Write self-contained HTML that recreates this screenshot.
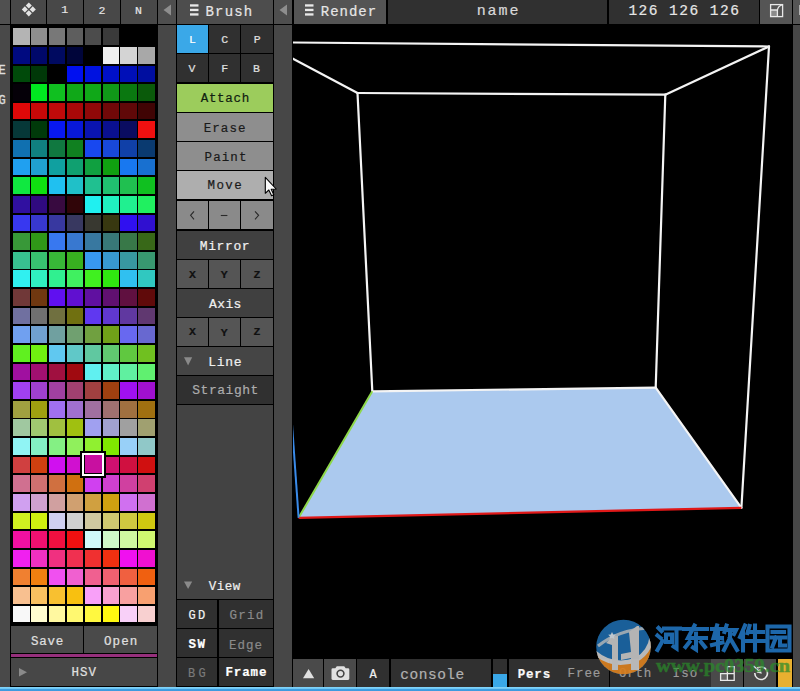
<!DOCTYPE html><html><head><meta charset="utf-8"><style>
html,body{margin:0;padding:0;}
body{width:800px;height:691px;background:#000;position:relative;overflow:hidden;font-family:"Liberation Mono",monospace;}
div{position:absolute;box-sizing:border-box;}
.t{white-space:pre;height:30px;line-height:30px;-webkit-text-stroke:0.2px currentColor;}
</style></head><body>
<div style="left:0px;top:0px;width:10px;height:24px;background:#505050;"></div>
<div style="left:0px;top:25px;width:10px;height:666px;background:#494949;"></div>
<div style="left:11px;top:0px;width:35px;height:24px;background:#484848;"></div>
<div style="left:47px;top:0px;width:36px;height:24px;background:#484848"></div>
<div style="left:84px;top:0px;width:36px;height:24px;background:#484848"></div>
<div style="left:121px;top:0px;width:36px;height:24px;background:#484848"></div>
<div style="left:13.0px;top:28.2px;width:16.6px;height:16.8px;background:#b4b4b4"></div>
<div style="left:30.9px;top:28.2px;width:16.6px;height:16.8px;background:#8e8e8e"></div>
<div style="left:48.8px;top:28.2px;width:16.6px;height:16.8px;background:#787878"></div>
<div style="left:66.7px;top:28.2px;width:16.6px;height:16.8px;background:#5e5e5e"></div>
<div style="left:84.6px;top:28.2px;width:16.6px;height:16.8px;background:#4c4c4c"></div>
<div style="left:102.5px;top:28.2px;width:16.6px;height:16.8px;background:#3a3a3a"></div>
<div style="left:120.4px;top:28.2px;width:16.6px;height:16.8px;background:#000000"></div>
<div style="left:138.3px;top:28.2px;width:16.6px;height:16.8px;background:#000000"></div>
<div style="left:13.0px;top:46.8px;width:16.6px;height:16.8px;background:#000a80"></div>
<div style="left:30.9px;top:46.8px;width:16.6px;height:16.8px;background:#00086a"></div>
<div style="left:48.8px;top:46.8px;width:16.6px;height:16.8px;background:#000a60"></div>
<div style="left:66.7px;top:46.8px;width:16.6px;height:16.8px;background:#00053a"></div>
<div style="left:84.6px;top:46.8px;width:16.6px;height:16.8px;background:#000000"></div>
<div style="left:102.5px;top:46.8px;width:16.6px;height:16.8px;background:#f0f0f0"></div>
<div style="left:120.4px;top:46.8px;width:16.6px;height:16.8px;background:#d4d4d4"></div>
<div style="left:138.3px;top:46.8px;width:16.6px;height:16.8px;background:#a8a8a8"></div>
<div style="left:13.0px;top:65.5px;width:16.6px;height:16.8px;background:#004a0a"></div>
<div style="left:30.9px;top:65.5px;width:16.6px;height:16.8px;background:#003808"></div>
<div style="left:48.8px;top:65.5px;width:16.6px;height:16.8px;background:#000000"></div>
<div style="left:66.7px;top:65.5px;width:16.6px;height:16.8px;background:#0010f0"></div>
<div style="left:84.6px;top:65.5px;width:16.6px;height:16.8px;background:#0012e0"></div>
<div style="left:102.5px;top:65.5px;width:16.6px;height:16.8px;background:#0010c8"></div>
<div style="left:120.4px;top:65.5px;width:16.6px;height:16.8px;background:#000fb8"></div>
<div style="left:138.3px;top:65.5px;width:16.6px;height:16.8px;background:#000ea0"></div>
<div style="left:13.0px;top:84.1px;width:16.6px;height:16.8px;background:#050008"></div>
<div style="left:30.9px;top:84.1px;width:16.6px;height:16.8px;background:#00e820"></div>
<div style="left:48.8px;top:84.1px;width:16.6px;height:16.8px;background:#10c020"></div>
<div style="left:66.7px;top:84.1px;width:16.6px;height:16.8px;background:#10a818"></div>
<div style="left:84.6px;top:84.1px;width:16.6px;height:16.8px;background:#10a818"></div>
<div style="left:102.5px;top:84.1px;width:16.6px;height:16.8px;background:#109818"></div>
<div style="left:120.4px;top:84.1px;width:16.6px;height:16.8px;background:#0a7810"></div>
<div style="left:138.3px;top:84.1px;width:16.6px;height:16.8px;background:#0a5a0a"></div>
<div style="left:13.0px;top:102.7px;width:16.6px;height:16.8px;background:#e00808"></div>
<div style="left:30.9px;top:102.7px;width:16.6px;height:16.8px;background:#c80808"></div>
<div style="left:48.8px;top:102.7px;width:16.6px;height:16.8px;background:#c00a0a"></div>
<div style="left:66.7px;top:102.7px;width:16.6px;height:16.8px;background:#a80808"></div>
<div style="left:84.6px;top:102.7px;width:16.6px;height:16.8px;background:#900808"></div>
<div style="left:102.5px;top:102.7px;width:16.6px;height:16.8px;background:#700808"></div>
<div style="left:120.4px;top:102.7px;width:16.6px;height:16.8px;background:#600808"></div>
<div style="left:138.3px;top:102.7px;width:16.6px;height:16.8px;background:#400404"></div>
<div style="left:13.0px;top:121.3px;width:16.6px;height:16.8px;background:#063838"></div>
<div style="left:30.9px;top:121.3px;width:16.6px;height:16.8px;background:#003a0a"></div>
<div style="left:48.8px;top:121.3px;width:16.6px;height:16.8px;background:#0818f0"></div>
<div style="left:66.7px;top:121.3px;width:16.6px;height:16.8px;background:#0818d8"></div>
<div style="left:84.6px;top:121.3px;width:16.6px;height:16.8px;background:#0a14b0"></div>
<div style="left:102.5px;top:121.3px;width:16.6px;height:16.8px;background:#0a1090"></div>
<div style="left:120.4px;top:121.3px;width:16.6px;height:16.8px;background:#0a0c60"></div>
<div style="left:138.3px;top:121.3px;width:16.6px;height:16.8px;background:#f01010"></div>
<div style="left:13.0px;top:140.0px;width:16.6px;height:16.8px;background:#1070b0"></div>
<div style="left:30.9px;top:140.0px;width:16.6px;height:16.8px;background:#108080"></div>
<div style="left:48.8px;top:140.0px;width:16.6px;height:16.8px;background:#107840"></div>
<div style="left:66.7px;top:140.0px;width:16.6px;height:16.8px;background:#108020"></div>
<div style="left:84.6px;top:140.0px;width:16.6px;height:16.8px;background:#1848f0"></div>
<div style="left:102.5px;top:140.0px;width:16.6px;height:16.8px;background:#1848d8"></div>
<div style="left:120.4px;top:140.0px;width:16.6px;height:16.8px;background:#1040a8"></div>
<div style="left:138.3px;top:140.0px;width:16.6px;height:16.8px;background:#0a3a70"></div>
<div style="left:13.0px;top:158.6px;width:16.6px;height:16.8px;background:#20a0f0"></div>
<div style="left:30.9px;top:158.6px;width:16.6px;height:16.8px;background:#20a0d0"></div>
<div style="left:48.8px;top:158.6px;width:16.6px;height:16.8px;background:#10a0a0"></div>
<div style="left:66.7px;top:158.6px;width:16.6px;height:16.8px;background:#10a070"></div>
<div style="left:84.6px;top:158.6px;width:16.6px;height:16.8px;background:#10a040"></div>
<div style="left:102.5px;top:158.6px;width:16.6px;height:16.8px;background:#10a010"></div>
<div style="left:120.4px;top:158.6px;width:16.6px;height:16.8px;background:#1878f0"></div>
<div style="left:138.3px;top:158.6px;width:16.6px;height:16.8px;background:#1870d0"></div>
<div style="left:13.0px;top:177.2px;width:16.6px;height:16.8px;background:#10e840"></div>
<div style="left:30.9px;top:177.2px;width:16.6px;height:16.8px;background:#10e010"></div>
<div style="left:48.8px;top:177.2px;width:16.6px;height:16.8px;background:#20c0f0"></div>
<div style="left:66.7px;top:177.2px;width:16.6px;height:16.8px;background:#20c0c8"></div>
<div style="left:84.6px;top:177.2px;width:16.6px;height:16.8px;background:#20c090"></div>
<div style="left:102.5px;top:177.2px;width:16.6px;height:16.8px;background:#20c070"></div>
<div style="left:120.4px;top:177.2px;width:16.6px;height:16.8px;background:#20c050"></div>
<div style="left:138.3px;top:177.2px;width:16.6px;height:16.8px;background:#10c020"></div>
<div style="left:13.0px;top:195.9px;width:16.6px;height:16.8px;background:#3010a0"></div>
<div style="left:30.9px;top:195.9px;width:16.6px;height:16.8px;background:#300a80"></div>
<div style="left:48.8px;top:195.9px;width:16.6px;height:16.8px;background:#380a40"></div>
<div style="left:66.7px;top:195.9px;width:16.6px;height:16.8px;background:#300508"></div>
<div style="left:84.6px;top:195.9px;width:16.6px;height:16.8px;background:#20f0f0"></div>
<div style="left:102.5px;top:195.9px;width:16.6px;height:16.8px;background:#20f0c0"></div>
<div style="left:120.4px;top:195.9px;width:16.6px;height:16.8px;background:#20f090"></div>
<div style="left:138.3px;top:195.9px;width:16.6px;height:16.8px;background:#20f060"></div>
<div style="left:13.0px;top:214.5px;width:16.6px;height:16.8px;background:#3838f0"></div>
<div style="left:30.9px;top:214.5px;width:16.6px;height:16.8px;background:#3838d0"></div>
<div style="left:48.8px;top:214.5px;width:16.6px;height:16.8px;background:#3838a0"></div>
<div style="left:66.7px;top:214.5px;width:16.6px;height:16.8px;background:#383860"></div>
<div style="left:84.6px;top:214.5px;width:16.6px;height:16.8px;background:#383830"></div>
<div style="left:102.5px;top:214.5px;width:16.6px;height:16.8px;background:#383810"></div>
<div style="left:120.4px;top:214.5px;width:16.6px;height:16.8px;background:#3010f0"></div>
<div style="left:138.3px;top:214.5px;width:16.6px;height:16.8px;background:#3010d0"></div>
<div style="left:13.0px;top:233.1px;width:16.6px;height:16.8px;background:#389838"></div>
<div style="left:30.9px;top:233.1px;width:16.6px;height:16.8px;background:#309818"></div>
<div style="left:48.8px;top:233.1px;width:16.6px;height:16.8px;background:#3878f0"></div>
<div style="left:66.7px;top:233.1px;width:16.6px;height:16.8px;background:#3878d0"></div>
<div style="left:84.6px;top:233.1px;width:16.6px;height:16.8px;background:#3878a0"></div>
<div style="left:102.5px;top:233.1px;width:16.6px;height:16.8px;background:#387878"></div>
<div style="left:120.4px;top:233.1px;width:16.6px;height:16.8px;background:#387848"></div>
<div style="left:138.3px;top:233.1px;width:16.6px;height:16.8px;background:#386818"></div>
<div style="left:13.0px;top:251.8px;width:16.6px;height:16.8px;background:#38c090"></div>
<div style="left:30.9px;top:251.8px;width:16.6px;height:16.8px;background:#38c070"></div>
<div style="left:48.8px;top:251.8px;width:16.6px;height:16.8px;background:#38b838"></div>
<div style="left:66.7px;top:251.8px;width:16.6px;height:16.8px;background:#38b020"></div>
<div style="left:84.6px;top:251.8px;width:16.6px;height:16.8px;background:#3898f0"></div>
<div style="left:102.5px;top:251.8px;width:16.6px;height:16.8px;background:#3898d0"></div>
<div style="left:120.4px;top:251.8px;width:16.6px;height:16.8px;background:#3898a0"></div>
<div style="left:138.3px;top:251.8px;width:16.6px;height:16.8px;background:#389870"></div>
<div style="left:13.0px;top:270.4px;width:16.6px;height:16.8px;background:#30f0f0"></div>
<div style="left:30.9px;top:270.4px;width:16.6px;height:16.8px;background:#30f0c0"></div>
<div style="left:48.8px;top:270.4px;width:16.6px;height:16.8px;background:#30f090"></div>
<div style="left:66.7px;top:270.4px;width:16.6px;height:16.8px;background:#40f060"></div>
<div style="left:84.6px;top:270.4px;width:16.6px;height:16.8px;background:#40f020"></div>
<div style="left:102.5px;top:270.4px;width:16.6px;height:16.8px;background:#30e810"></div>
<div style="left:120.4px;top:270.4px;width:16.6px;height:16.8px;background:#30c0f0"></div>
<div style="left:138.3px;top:270.4px;width:16.6px;height:16.8px;background:#30c8c0"></div>
<div style="left:13.0px;top:289.0px;width:16.6px;height:16.8px;background:#703838"></div>
<div style="left:30.9px;top:289.0px;width:16.6px;height:16.8px;background:#703810"></div>
<div style="left:48.8px;top:289.0px;width:16.6px;height:16.8px;background:#6010f0"></div>
<div style="left:66.7px;top:289.0px;width:16.6px;height:16.8px;background:#6010d0"></div>
<div style="left:84.6px;top:289.0px;width:16.6px;height:16.8px;background:#6010a0"></div>
<div style="left:102.5px;top:289.0px;width:16.6px;height:16.8px;background:#601070"></div>
<div style="left:120.4px;top:289.0px;width:16.6px;height:16.8px;background:#601040"></div>
<div style="left:138.3px;top:289.0px;width:16.6px;height:16.8px;background:#600a0a"></div>
<div style="left:13.0px;top:307.6px;width:16.6px;height:16.8px;background:#7070a0"></div>
<div style="left:30.9px;top:307.6px;width:16.6px;height:16.8px;background:#707070"></div>
<div style="left:48.8px;top:307.6px;width:16.6px;height:16.8px;background:#707040"></div>
<div style="left:66.7px;top:307.6px;width:16.6px;height:16.8px;background:#707010"></div>
<div style="left:84.6px;top:307.6px;width:16.6px;height:16.8px;background:#6038f0"></div>
<div style="left:102.5px;top:307.6px;width:16.6px;height:16.8px;background:#6038d0"></div>
<div style="left:120.4px;top:307.6px;width:16.6px;height:16.8px;background:#6038a0"></div>
<div style="left:138.3px;top:307.6px;width:16.6px;height:16.8px;background:#603870"></div>
<div style="left:13.0px;top:326.3px;width:16.6px;height:16.8px;background:#70a0f0"></div>
<div style="left:30.9px;top:326.3px;width:16.6px;height:16.8px;background:#70a0d0"></div>
<div style="left:48.8px;top:326.3px;width:16.6px;height:16.8px;background:#70a0a0"></div>
<div style="left:66.7px;top:326.3px;width:16.6px;height:16.8px;background:#70a070"></div>
<div style="left:84.6px;top:326.3px;width:16.6px;height:16.8px;background:#70a040"></div>
<div style="left:102.5px;top:326.3px;width:16.6px;height:16.8px;background:#70a018"></div>
<div style="left:120.4px;top:326.3px;width:16.6px;height:16.8px;background:#6868f0"></div>
<div style="left:138.3px;top:326.3px;width:16.6px;height:16.8px;background:#6868d0"></div>
<div style="left:13.0px;top:344.9px;width:16.6px;height:16.8px;background:#60f020"></div>
<div style="left:30.9px;top:344.9px;width:16.6px;height:16.8px;background:#70f010"></div>
<div style="left:48.8px;top:344.9px;width:16.6px;height:16.8px;background:#60c8f0"></div>
<div style="left:66.7px;top:344.9px;width:16.6px;height:16.8px;background:#60c8c8"></div>
<div style="left:84.6px;top:344.9px;width:16.6px;height:16.8px;background:#60c8a0"></div>
<div style="left:102.5px;top:344.9px;width:16.6px;height:16.8px;background:#60c870"></div>
<div style="left:120.4px;top:344.9px;width:16.6px;height:16.8px;background:#60c840"></div>
<div style="left:138.3px;top:344.9px;width:16.6px;height:16.8px;background:#70c020"></div>
<div style="left:13.0px;top:363.5px;width:16.6px;height:16.8px;background:#a010a0"></div>
<div style="left:30.9px;top:363.5px;width:16.6px;height:16.8px;background:#a01070"></div>
<div style="left:48.8px;top:363.5px;width:16.6px;height:16.8px;background:#a01040"></div>
<div style="left:66.7px;top:363.5px;width:16.6px;height:16.8px;background:#a00a10"></div>
<div style="left:84.6px;top:363.5px;width:16.6px;height:16.8px;background:#60f0f0"></div>
<div style="left:102.5px;top:363.5px;width:16.6px;height:16.8px;background:#60f0c8"></div>
<div style="left:120.4px;top:363.5px;width:16.6px;height:16.8px;background:#60f0a0"></div>
<div style="left:138.3px;top:363.5px;width:16.6px;height:16.8px;background:#60f070"></div>
<div style="left:13.0px;top:382.2px;width:16.6px;height:16.8px;background:#a040f0"></div>
<div style="left:30.9px;top:382.2px;width:16.6px;height:16.8px;background:#a040d0"></div>
<div style="left:48.8px;top:382.2px;width:16.6px;height:16.8px;background:#a040a0"></div>
<div style="left:66.7px;top:382.2px;width:16.6px;height:16.8px;background:#a04070"></div>
<div style="left:84.6px;top:382.2px;width:16.6px;height:16.8px;background:#a04040"></div>
<div style="left:102.5px;top:382.2px;width:16.6px;height:16.8px;background:#a04010"></div>
<div style="left:120.4px;top:382.2px;width:16.6px;height:16.8px;background:#a010f0"></div>
<div style="left:138.3px;top:382.2px;width:16.6px;height:16.8px;background:#a010d0"></div>
<div style="left:13.0px;top:400.8px;width:16.6px;height:16.8px;background:#a0a040"></div>
<div style="left:30.9px;top:400.8px;width:16.6px;height:16.8px;background:#a0a010"></div>
<div style="left:48.8px;top:400.8px;width:16.6px;height:16.8px;background:#a070f0"></div>
<div style="left:66.7px;top:400.8px;width:16.6px;height:16.8px;background:#a070d0"></div>
<div style="left:84.6px;top:400.8px;width:16.6px;height:16.8px;background:#a070a0"></div>
<div style="left:102.5px;top:400.8px;width:16.6px;height:16.8px;background:#a07070"></div>
<div style="left:120.4px;top:400.8px;width:16.6px;height:16.8px;background:#a07040"></div>
<div style="left:138.3px;top:400.8px;width:16.6px;height:16.8px;background:#a07010"></div>
<div style="left:13.0px;top:419.4px;width:16.6px;height:16.8px;background:#a0c8a0"></div>
<div style="left:30.9px;top:419.4px;width:16.6px;height:16.8px;background:#a0c870"></div>
<div style="left:48.8px;top:419.4px;width:16.6px;height:16.8px;background:#a0c040"></div>
<div style="left:66.7px;top:419.4px;width:16.6px;height:16.8px;background:#a0c010"></div>
<div style="left:84.6px;top:419.4px;width:16.6px;height:16.8px;background:#a0a0f0"></div>
<div style="left:102.5px;top:419.4px;width:16.6px;height:16.8px;background:#a0a0d0"></div>
<div style="left:120.4px;top:419.4px;width:16.6px;height:16.8px;background:#a0a0a0"></div>
<div style="left:138.3px;top:419.4px;width:16.6px;height:16.8px;background:#a0a070"></div>
<div style="left:13.0px;top:438.1px;width:16.6px;height:16.8px;background:#90f4f4"></div>
<div style="left:30.9px;top:438.1px;width:16.6px;height:16.8px;background:#84f0c4"></div>
<div style="left:48.8px;top:438.1px;width:16.6px;height:16.8px;background:#84f084"></div>
<div style="left:66.7px;top:438.1px;width:16.6px;height:16.8px;background:#90f05c"></div>
<div style="left:84.6px;top:438.1px;width:16.6px;height:16.8px;background:#90f030"></div>
<div style="left:102.5px;top:438.1px;width:16.6px;height:16.8px;background:#80e800"></div>
<div style="left:120.4px;top:438.1px;width:16.6px;height:16.8px;background:#98d0f8"></div>
<div style="left:138.3px;top:438.1px;width:16.6px;height:16.8px;background:#90c8c8"></div>
<div style="left:13.0px;top:456.7px;width:16.6px;height:16.8px;background:#d04040"></div>
<div style="left:30.9px;top:456.7px;width:16.6px;height:16.8px;background:#d04010"></div>
<div style="left:48.8px;top:456.7px;width:16.6px;height:16.8px;background:#d010f0"></div>
<div style="left:66.7px;top:456.7px;width:16.6px;height:16.8px;background:#d010d0"></div>
<div style="left:84.6px;top:456.7px;width:16.6px;height:16.8px;background:#d010a0"></div>
<div style="left:102.5px;top:456.7px;width:16.6px;height:16.8px;background:#d01070"></div>
<div style="left:120.4px;top:456.7px;width:16.6px;height:16.8px;background:#d01040"></div>
<div style="left:138.3px;top:456.7px;width:16.6px;height:16.8px;background:#d01010"></div>
<div style="left:13.0px;top:475.3px;width:16.6px;height:16.8px;background:#d07090"></div>
<div style="left:30.9px;top:475.3px;width:16.6px;height:16.8px;background:#d07070"></div>
<div style="left:48.8px;top:475.3px;width:16.6px;height:16.8px;background:#d07040"></div>
<div style="left:66.7px;top:475.3px;width:16.6px;height:16.8px;background:#d07010"></div>
<div style="left:84.6px;top:475.3px;width:16.6px;height:16.8px;background:#d040f0"></div>
<div style="left:102.5px;top:475.3px;width:16.6px;height:16.8px;background:#d040d0"></div>
<div style="left:120.4px;top:475.3px;width:16.6px;height:16.8px;background:#d040a0"></div>
<div style="left:138.3px;top:475.3px;width:16.6px;height:16.8px;background:#d04070"></div>
<div style="left:13.0px;top:493.9px;width:16.6px;height:16.8px;background:#d0a0f0"></div>
<div style="left:30.9px;top:493.9px;width:16.6px;height:16.8px;background:#d0a0d0"></div>
<div style="left:48.8px;top:493.9px;width:16.6px;height:16.8px;background:#d0a0a0"></div>
<div style="left:66.7px;top:493.9px;width:16.6px;height:16.8px;background:#d0a070"></div>
<div style="left:84.6px;top:493.9px;width:16.6px;height:16.8px;background:#d0a040"></div>
<div style="left:102.5px;top:493.9px;width:16.6px;height:16.8px;background:#d0a010"></div>
<div style="left:120.4px;top:493.9px;width:16.6px;height:16.8px;background:#d070f0"></div>
<div style="left:138.3px;top:493.9px;width:16.6px;height:16.8px;background:#d070d0"></div>
<div style="left:13.0px;top:512.6px;width:16.6px;height:16.8px;background:#d0f020"></div>
<div style="left:30.9px;top:512.6px;width:16.6px;height:16.8px;background:#d0f010"></div>
<div style="left:48.8px;top:512.6px;width:16.6px;height:16.8px;background:#d0d0f0"></div>
<div style="left:66.7px;top:512.6px;width:16.6px;height:16.8px;background:#d0d0d0"></div>
<div style="left:84.6px;top:512.6px;width:16.6px;height:16.8px;background:#d0c8a0"></div>
<div style="left:102.5px;top:512.6px;width:16.6px;height:16.8px;background:#d0c870"></div>
<div style="left:120.4px;top:512.6px;width:16.6px;height:16.8px;background:#d0c840"></div>
<div style="left:138.3px;top:512.6px;width:16.6px;height:16.8px;background:#d0c810"></div>
<div style="left:13.0px;top:531.2px;width:16.6px;height:16.8px;background:#f010a0"></div>
<div style="left:30.9px;top:531.2px;width:16.6px;height:16.8px;background:#f01070"></div>
<div style="left:48.8px;top:531.2px;width:16.6px;height:16.8px;background:#f01040"></div>
<div style="left:66.7px;top:531.2px;width:16.6px;height:16.8px;background:#f01010"></div>
<div style="left:84.6px;top:531.2px;width:16.6px;height:16.8px;background:#d0f8f8"></div>
<div style="left:102.5px;top:531.2px;width:16.6px;height:16.8px;background:#d0f8c8"></div>
<div style="left:120.4px;top:531.2px;width:16.6px;height:16.8px;background:#d0f8a0"></div>
<div style="left:138.3px;top:531.2px;width:16.6px;height:16.8px;background:#d0f870"></div>
<div style="left:13.0px;top:549.8px;width:16.6px;height:16.8px;background:#f020f0"></div>
<div style="left:30.9px;top:549.8px;width:16.6px;height:16.8px;background:#f030c0"></div>
<div style="left:48.8px;top:549.8px;width:16.6px;height:16.8px;background:#f03080"></div>
<div style="left:66.7px;top:549.8px;width:16.6px;height:16.8px;background:#f03050"></div>
<div style="left:84.6px;top:549.8px;width:16.6px;height:16.8px;background:#f03030"></div>
<div style="left:102.5px;top:549.8px;width:16.6px;height:16.8px;background:#f03010"></div>
<div style="left:120.4px;top:549.8px;width:16.6px;height:16.8px;background:#f010f0"></div>
<div style="left:138.3px;top:549.8px;width:16.6px;height:16.8px;background:#f010d0"></div>
<div style="left:13.0px;top:568.5px;width:16.6px;height:16.8px;background:#f08030"></div>
<div style="left:30.9px;top:568.5px;width:16.6px;height:16.8px;background:#f08010"></div>
<div style="left:48.8px;top:568.5px;width:16.6px;height:16.8px;background:#f050f0"></div>
<div style="left:66.7px;top:568.5px;width:16.6px;height:16.8px;background:#f060d0"></div>
<div style="left:84.6px;top:568.5px;width:16.6px;height:16.8px;background:#f06090"></div>
<div style="left:102.5px;top:568.5px;width:16.6px;height:16.8px;background:#f06070"></div>
<div style="left:120.4px;top:568.5px;width:16.6px;height:16.8px;background:#f06040"></div>
<div style="left:138.3px;top:568.5px;width:16.6px;height:16.8px;background:#f06010"></div>
<div style="left:13.0px;top:587.1px;width:16.6px;height:16.8px;background:#f8c090"></div>
<div style="left:30.9px;top:587.1px;width:16.6px;height:16.8px;background:#f8c060"></div>
<div style="left:48.8px;top:587.1px;width:16.6px;height:16.8px;background:#f8c030"></div>
<div style="left:66.7px;top:587.1px;width:16.6px;height:16.8px;background:#f8c010"></div>
<div style="left:84.6px;top:587.1px;width:16.6px;height:16.8px;background:#f8a0f8"></div>
<div style="left:102.5px;top:587.1px;width:16.6px;height:16.8px;background:#f8a0d0"></div>
<div style="left:120.4px;top:587.1px;width:16.6px;height:16.8px;background:#f8a0a0"></div>
<div style="left:138.3px;top:587.1px;width:16.6px;height:16.8px;background:#f8a070"></div>
<div style="left:13.0px;top:605.7px;width:16.6px;height:16.8px;background:#f8f8f8"></div>
<div style="left:30.9px;top:605.7px;width:16.6px;height:16.8px;background:#fffcd0"></div>
<div style="left:48.8px;top:605.7px;width:16.6px;height:16.8px;background:#fff8a0"></div>
<div style="left:66.7px;top:605.7px;width:16.6px;height:16.8px;background:#fff870"></div>
<div style="left:84.6px;top:605.7px;width:16.6px;height:16.8px;background:#fff840"></div>
<div style="left:102.5px;top:605.7px;width:16.6px;height:16.8px;background:#fff810"></div>
<div style="left:120.4px;top:605.7px;width:16.6px;height:16.8px;background:#f8d0f8"></div>
<div style="left:138.3px;top:605.7px;width:16.6px;height:16.8px;background:#f8d0d0"></div>
<div style="left:11px;top:626px;width:72px;height:27.3px;background:#4a4a4a"></div>
<div style="left:84px;top:626px;width:73px;height:27.3px;background:#4a4a4a"></div>
<div style="left:11px;top:654.4px;width:146px;height:3.1px;background:#96307c;"></div>
<div style="left:11px;top:658.2px;width:146px;height:27.6px;background:#474747"></div>
<div style="left:158px;top:0px;width:18px;height:24px;background:#4e4e4e;"></div>
<div style="left:158px;top:25px;width:18px;height:662px;background:#474747;"></div>
<div style="left:274px;top:0px;width:18px;height:24px;background:#4e4e4e;"></div>
<div style="left:274px;top:25px;width:18px;height:662px;background:#474747;"></div>
<div style="left:177px;top:0px;width:96px;height:24px;background:#4d4d4d"></div>
<div style="left:177px;top:25px;width:31px;height:28px;background:#3aa8e8"></div>
<div style="left:209px;top:25px;width:31px;height:28px;background:#303030"></div>
<div style="left:241px;top:25px;width:32px;height:28px;background:#303030"></div>
<div style="left:177px;top:54px;width:31px;height:28px;background:#303030"></div>
<div style="left:209px;top:54px;width:31px;height:28px;background:#303030"></div>
<div style="left:241px;top:54px;width:32px;height:28px;background:#303030"></div>
<div style="left:177px;top:84px;width:96px;height:28px;background:#9ccc5c"></div>
<div style="left:177px;top:113px;width:96px;height:28px;background:#8e8e8e"></div>
<div style="left:177px;top:142px;width:96px;height:28px;background:#8e8e8e"></div>
<div style="left:177px;top:171px;width:96px;height:28px;background:#aeaeae"></div>
<div style="left:177px;top:201px;width:31px;height:28px;background:#8a8a8a"></div>
<div style="left:209px;top:201px;width:31px;height:28px;background:#8a8a8a"></div>
<div style="left:241px;top:201px;width:32px;height:28px;background:#8a8a8a"></div>
<div style="left:177px;top:231px;width:96px;height:28px;background:#404040"></div>
<div style="left:177px;top:260px;width:31px;height:28px;background:#555555"></div>
<div style="left:209px;top:260px;width:31px;height:28px;background:#555555"></div>
<div style="left:241px;top:260px;width:32px;height:28px;background:#555555"></div>
<div style="left:177px;top:289px;width:96px;height:28px;background:#404040"></div>
<div style="left:177px;top:318px;width:31px;height:28px;background:#555555"></div>
<div style="left:209px;top:318px;width:31px;height:28px;background:#555555"></div>
<div style="left:241px;top:318px;width:32px;height:28px;background:#555555"></div>
<div style="left:177px;top:347px;width:96px;height:28px;background:#454545"></div>
<div style="left:177px;top:376px;width:96px;height:28px;background:#303030"></div>
<div style="left:177px;top:405px;width:96px;height:194px;background:#434343;"></div>
<div style="left:177px;top:600px;width:40px;height:28px;background:#303030"></div>
<div style="left:219px;top:600px;width:54px;height:28px;background:#303030"></div>
<div style="left:177px;top:629px;width:40px;height:28px;background:#303030"></div>
<div style="left:219px;top:629px;width:54px;height:28px;background:#303030"></div>
<div style="left:177px;top:658px;width:40px;height:27.5px;background:#303030"></div>
<div style="left:219px;top:658px;width:54px;height:27.5px;background:#303030"></div>
<div style="left:294px;top:0px;width:92px;height:24px;background:#545454"></div>
<div style="left:388px;top:0px;width:219px;height:24px;background:#303030"></div>
<div style="left:609px;top:0px;width:150px;height:24px;background:#303030"></div>
<div style="left:760px;top:0px;width:32px;height:24px;background:#555555;"></div>
<div style="left:793px;top:0px;width:7px;height:24px;background:#555555;"></div>
<div style="left:793px;top:25px;width:7px;height:666px;background:#474747;"></div>
<div style="left:293px;top:659px;width:30px;height:28px;background:#4a4a4a;"></div>
<div style="left:324px;top:659px;width:32px;height:28px;background:#4a4a4a;"></div>
<div style="left:357px;top:659px;width:32px;height:28px;background:#303030"></div>
<div style="left:391px;top:659px;width:100px;height:28px;background:#303030"></div>
<div style="left:493px;top:659px;width:14px;height:28px;background:#303030;"></div>
<div style="left:493px;top:674px;width:14px;height:13px;background:#3aa8e8;"></div>
<div style="left:509px;top:659px;width:99.5px;height:28px;background:#303030;"></div>
<div style="left:610px;top:659px;width:100.5px;height:28px;background:#303030;"></div>
<div style="left:711px;top:659px;width:32px;height:28px;background:#4a4a4a;"></div>
<div style="left:744px;top:659px;width:32px;height:28px;background:#4a4a4a;"></div>
<div style="left:778px;top:659px;width:14px;height:28px;background:#e8b030;"></div>
<svg style="position:absolute;left:293px;top:25px;" width="500" height="633" viewBox="293 25 500 633">
<polygon points="298.6,517.8 372.3,391.3 655.7,387.6 741.4,507.8" fill="#abc9ee"/>
<g stroke="#f4f4f4" stroke-width="2.2" fill="none" stroke-linecap="round">
<line x1="280" y1="42.4" x2="769" y2="46.5"/>
<line x1="280" y1="51.8" x2="357.5" y2="93"/>
<line x1="357.5" y1="93" x2="665.3" y2="94.7"/>
<line x1="665.3" y1="94.7" x2="769" y2="46.5"/>
<line x1="769" y1="46.5" x2="741.4" y2="507.8"/>
<line x1="357.5" y1="93" x2="372.3" y2="391.3"/>
<line x1="665.3" y1="94.7" x2="655.7" y2="387.6"/>
<line x1="372.3" y1="391.3" x2="655.7" y2="387.6"/>
<line x1="655.7" y1="387.6" x2="741.4" y2="507.8"/>
</g>
<line x1="298.6" y1="517.8" x2="372.3" y2="391.3" stroke="#8ed84a" stroke-width="2"/>
<line x1="298.6" y1="517.8" x2="741.4" y2="507.8" stroke="#e01818" stroke-width="2.2"/>
<line x1="298.6" y1="517.8" x2="291" y2="410" stroke="#3a8ae8" stroke-width="2"/>
</svg>

<!-- diamond icon -->
<svg style="position:absolute;left:11px;top:0" width="35" height="23" viewBox="11 0 35 23">
<g fill="#e4e4e4"><path d="M28.80,2.40 L31.85,5.45 L28.80,8.50 L25.75,5.45Z"/><path d="M24.85,6.35 L27.90,9.40 L24.85,12.45 L21.80,9.40Z"/><path d="M32.75,6.35 L35.80,9.40 L32.75,12.45 L29.70,9.40Z"/><path d="M28.80,10.30 L31.85,13.35 L28.80,16.40 L25.75,13.35Z"/></g></svg>
<!-- arrows left -->
<svg style="position:absolute;left:158px;top:0" width="18" height="24" viewBox="158 0 18 24">
<path d="M163.5,10 L171,4.5 L171,15.5Z" fill="#8e8e8e"/></svg>
<svg style="position:absolute;left:274px;top:0" width="18" height="24" viewBox="274 0 18 24">
<path d="M279.5,10 L287,4.5 L287,15.5Z" fill="#8e8e8e"/></svg>
<!-- hamburgers -->
<svg style="position:absolute;left:185px;top:0" width="20" height="23" viewBox="185 0 20 23">
<g fill="#e8e8e8"><rect x="190" y="4.3" width="8.5" height="2.3"/><rect x="190" y="8.8" width="8.5" height="2.3"/><rect x="190" y="13.3" width="8.5" height="2.3"/></g></svg>
<svg style="position:absolute;left:300px;top:0" width="20" height="23" viewBox="300 0 20 23">
<g fill="#e8e8e8"><rect x="305" y="4.3" width="8.5" height="2.3"/><rect x="305" y="8.8" width="8.5" height="2.3"/><rect x="305" y="13.3" width="8.5" height="2.3"/></g></svg>
<!-- top right icon -->
<svg style="position:absolute;left:760px;top:0" width="32" height="23" viewBox="760 0 32 23">
<rect x="777.4" y="9.6" width="-0" height="0" fill="none"/>
<path d="M770.8,10.2 H777.2 V16.4 H770.8Z" fill="#8a8a8a"/>
<rect x="770.6" y="4.6" width="12" height="12" fill="none" stroke="#e8e8e8" stroke-width="1.3"/>
<path d="M770.6,10 H777.4 V16.6 M777.4,10 Q778,6 782.6,4.6" fill="none" stroke="#e8e8e8" stroke-width="1.3"/>
</svg>
<!-- HSV triangle -->
<svg style="position:absolute;left:11px;top:659px" width="30" height="27" viewBox="11 659 30 27">
<path d="M19,668 L27,672.3 L19,676.6Z" fill="#8a8a8a"/></svg>
<!-- Line & View triangles -->
<svg style="position:absolute;left:177px;top:347px" width="30" height="28" viewBox="177 347 30 28">
<path d="M184,357.2 L192.2,357.2 L188.1,365.4Z" fill="#8a8a8a"/></svg>
<svg style="position:absolute;left:177px;top:571px" width="30" height="28" viewBox="177 571 30 28">
<path d="M184,581.4 L192.2,581.4 L188.1,589Z" fill="#8a8a8a"/></svg>
<!-- left strip letters -->
<div style="left:-1.5px;top:63.4px;width:20px;height:16px;font-size:12px;line-height:16px;color:#ddd;font-family:'Liberation Mono',monospace;-webkit-text-stroke:0.35px #ddd;">E</div>
<div style="left:-1.5px;top:92.7px;width:20px;height:16px;font-size:12px;line-height:16px;color:#ddd;font-family:'Liberation Mono',monospace;-webkit-text-stroke:0.35px #ddd;">G</div>
<!-- palette selection -->
<div style="left:80px;top:451px;width:26px;height:26.5px;background:#000;"></div>
<div style="left:81.7px;top:452.7px;width:22.5px;height:23.4px;border:2.6px solid #fff;background:#000;"></div>
<div style="left:84.6px;top:455.4px;width:17px;height:17.8px;background:#c810a0;"></div>
<!-- bottom triangle & camera -->
<svg style="position:absolute;left:293px;top:659px" width="64" height="28" viewBox="293 659 64 28">
<path d="M308.6,669 L314.2,678.2 L303,678.2Z" fill="#e0e0e0"/>
<path d="M331.5,669.4 Q331.5,668.2 332.8,668.2 L335.3,668.2 L336.8,666.2 L344.2,666.2 L345.7,668.2 L348,668.2 Q349.3,668.2 349.3,669.4 L349.3,678.8 Q349.3,679.9 348,679.9 L332.8,679.9 Q331.5,679.9 331.5,678.8Z" fill="#e0e0e0"/>
<circle cx="340.5" cy="673.6" r="3.4" fill="none" stroke="#444" stroke-width="1.6"/>
</svg>
<!-- grid icon & rotate icon -->
<svg style="position:absolute;left:711px;top:659px" width="65" height="28" viewBox="711 659 65 28">
<rect x="720.6" y="673.6" width="6.8" height="6.8" fill="#666"/>
<rect x="727.4" y="673.6" width="6.8" height="6.8" fill="#3e3e3e"/>
<path d="M727.4,666.6 H734.2 V680.4 H720.6 V673.6 H734.2 M727.4,666.6 V680.4" fill="none" stroke="#e8e8e8" stroke-width="1.3"/>
<path d="M757.3,668.2 A6.3,6.3 0 1 1 754.8,673" fill="none" stroke="#e8e8e8" stroke-width="1.6"/>
<path d="M753.5,666 L760,672" stroke="#e8e8e8" stroke-width="1.6"/>
<path d="M761.8,673.8 L756.6,672.4 L760.4,668.6Z" fill="#e8e8e8"/>
</svg>
<!-- cursor -->
<svg style="position:absolute;left:262px;top:174px" width="18" height="25" viewBox="262 174 18 25">
<path d="M265.3,177.3 L265.3,193.3 L268.8,190 L271.6,195.8 L273.8,194.8 L271.2,189.2 L276.2,189Z" fill="#fafafa" stroke="#000" stroke-width="1.1" stroke-linejoin="round"/>
</svg>
<div style="left:798.8px;top:5px;width:1.2px;height:10px;background:#b0b0b0;"></div>

<div class="t" style="left:61.18px;top:-4.69px;font-size:11.5px;letter-spacing:0.000px;color:#e6e6e6;font-weight:normal">1</div>
<div class="t" style="left:98.45px;top:-4.45px;font-size:11.5px;letter-spacing:0.000px;color:#e6e6e6;font-weight:normal">2</div>
<div class="t" style="left:134.94px;top:-4.30px;font-size:11.5px;letter-spacing:0.000px;color:#e6e6e6;font-weight:normal">N</div>
<div class="t" style="left:205.54px;top:-3.15px;font-size:14px;letter-spacing:1.174px;color:#e6e6e6;font-weight:normal">Brush</div>
<div class="t" style="left:320.84px;top:-3.15px;font-size:14px;letter-spacing:0.968px;color:#e6e6e6;font-weight:normal">Render</div>
<div class="t" style="left:476.65px;top:-3.51px;font-size:15px;letter-spacing:1.967px;color:#d8d8d8;font-weight:normal">name</div>
<div class="t" style="left:628.38px;top:-3.86px;font-size:14.5px;letter-spacing:1.481px;color:#e6e6e6;font-weight:normal">126 126 126</div>
<div class="t" style="left:189.04px;top:25.01px;font-size:11.5px;letter-spacing:0.000px;color:#ffffff;font-weight:normal">L</div>
<div class="t" style="left:221.13px;top:24.94px;font-size:11.5px;letter-spacing:0.000px;color:#e0e0e0;font-weight:normal">C</div>
<div class="t" style="left:253.68px;top:24.63px;font-size:11.5px;letter-spacing:0.000px;color:#e0e0e0;font-weight:normal">P</div>
<div class="t" style="left:188.59px;top:53.72px;font-size:11.5px;letter-spacing:0.000px;color:#e0e0e0;font-weight:normal">V</div>
<div class="t" style="left:221.16px;top:53.53px;font-size:11.5px;letter-spacing:0.000px;color:#e0e0e0;font-weight:normal">F</div>
<div class="t" style="left:253.01px;top:53.72px;font-size:11.5px;letter-spacing:0.000px;color:#e0e0e0;font-weight:normal">B</div>
<div class="t" style="left:200.78px;top:84.43px;font-size:12.5px;letter-spacing:0.677px;color:#102010;font-weight:normal">Attach</div>
<div class="t" style="left:203.71px;top:113.53px;font-size:12.5px;letter-spacing:1.061px;color:#1a1a1a;font-weight:normal">Erase</div>
<div class="t" style="left:204.61px;top:142.59px;font-size:12.5px;letter-spacing:1.071px;color:#1a1a1a;font-weight:normal">Paint</div>
<div class="t" style="left:207.57px;top:171.26px;font-size:12.5px;letter-spacing:1.405px;color:#1a1a1a;font-weight:normal">Move</div>
<div class="t" style="left:199.86px;top:232.46px;font-size:13px;letter-spacing:0.578px;color:#f0f0f0;font-weight:normal">Mirror</div>
<div class="t" style="left:188.88px;top:259.81px;font-size:11.5px;letter-spacing:0.000px;color:#101010;font-weight:bold">X</div>
<div class="t" style="left:220.80px;top:259.93px;font-size:11.5px;letter-spacing:0.000px;color:#101010;font-weight:bold">Y</div>
<div class="t" style="left:253.56px;top:259.81px;font-size:11.5px;letter-spacing:0.000px;color:#101010;font-weight:bold">Z</div>
<div class="t" style="left:209.08px;top:289.52px;font-size:13px;letter-spacing:0.367px;color:#f0f0f0;font-weight:normal">Axis</div>
<div class="t" style="left:188.88px;top:317.42px;font-size:11.5px;letter-spacing:0.000px;color:#101010;font-weight:bold">X</div>
<div class="t" style="left:220.80px;top:317.54px;font-size:11.5px;letter-spacing:0.000px;color:#101010;font-weight:bold">Y</div>
<div class="t" style="left:253.56px;top:317.42px;font-size:11.5px;letter-spacing:0.000px;color:#101010;font-weight:bold">Z</div>
<div class="t" style="left:208.13px;top:347.63px;font-size:13px;letter-spacing:0.712px;color:#f0f0f0;font-weight:normal">Line</div>
<div class="t" style="left:192.31px;top:376.08px;font-size:13px;letter-spacing:0.520px;color:#acacac;font-weight:normal">Straight</div>
<div class="t" style="left:208.74px;top:571.85px;font-size:12.5px;letter-spacing:0.488px;color:#f0f0f0;font-weight:normal">View</div>
<div class="t" style="left:188.56px;top:600.60px;font-size:12px;letter-spacing:2.312px;color:#f4f4f4;font-weight:normal">GD</div>
<div class="t" style="left:229.55px;top:601.13px;font-size:12.5px;letter-spacing:1.258px;color:#8a8a8a;font-weight:normal">Grid</div>
<div class="t" style="left:188.60px;top:629.65px;font-size:12.5px;letter-spacing:1.490px;color:#ffffff;font-weight:bold">SW</div>
<div class="t" style="left:229.11px;top:630.52px;font-size:12.5px;letter-spacing:0.925px;color:#8a8a8a;font-weight:normal">Edge</div>
<div class="t" style="left:187.92px;top:658.60px;font-size:12px;letter-spacing:3.282px;color:#7a7a7a;font-weight:normal">BG</div>
<div class="t" style="left:225.49px;top:658.49px;font-size:12.5px;letter-spacing:0.863px;color:#ffffff;font-weight:bold">Frame</div>
<div class="t" style="left:30.91px;top:626.83px;font-size:12.5px;letter-spacing:0.758px;color:#e0e0e0;font-weight:normal">Save</div>
<div class="t" style="left:104.10px;top:627.06px;font-size:12.5px;letter-spacing:1.022px;color:#e0e0e0;font-weight:normal">Open</div>
<div class="t" style="left:71.41px;top:658.33px;font-size:12.5px;letter-spacing:1.077px;color:#e0e0e0;font-weight:normal">HSV</div>
<div class="t" style="left:369.46px;top:660.06px;font-size:12px;letter-spacing:0.000px;color:#f0f0f0;font-weight:normal">A</div>
<div class="t" style="left:400.29px;top:660.26px;font-size:14.5px;letter-spacing:0.513px;color:#b0b0b0;font-weight:normal">console</div>
<div class="t" style="left:517.66px;top:659.52px;font-size:12.5px;letter-spacing:0.830px;color:#f8f8f8;font-weight:bold">Pers</div>
<div class="t" style="left:567.58px;top:659.43px;font-size:12.5px;letter-spacing:0.899px;color:#9a9a9a;font-weight:normal">Free</div>
<div class="t" style="left:619.00px;top:659.43px;font-size:12.5px;letter-spacing:0.722px;color:#9a9a9a;font-weight:normal">Orth</div>
<div class="t" style="left:672.55px;top:659.43px;font-size:12.5px;letter-spacing:1.145px;color:#9a9a9a;font-weight:normal">Iso</div>
<!-- watermark logo -->
<svg style="position:absolute;left:590px;top:615px" width="210" height="76" viewBox="590 615 210 76">
<defs><clipPath id="cc"><circle cx="623.5" cy="647" r="27.3"/></clipPath></defs>
<g opacity="0.92">
<circle cx="623.5" cy="647" r="27.3" fill="#1d68a6"/>
<g clip-path="url(#cc)">
<path d="M594,652 Q612,666 634,660 Q648,652 651,636 L660,636 L660,700 L590,700Z" fill="#d9801f"/>
<path d="M594,652 Q612,668 636,660 Q650,652 652,636" fill="none" stroke="#c8c8c8" stroke-width="4.5"/>
<path d="M598,646 Q618,630 648,628" fill="none" stroke="#c8c8c8" stroke-width="3" opacity="0.8"/>
</g>
<path d="M606,643 L613,636 L618,636 L618,670 L612,670 L612,645Z" fill="#c4c4c4"/>
<path d="M629,632 L637,626 L639,626 L639,670 L631,670 L631,658 L621,660 L621,654 L631,652Z" fill="#c4c4c4"/>
<path d="M612,632 l1.2,2.4 2.6,0.3 -1.9,1.8 0.5,2.6 -2.4,-1.3 -2.4,1.3 0.5,-2.6 -1.9,-1.8 2.6,-0.3Z" fill="#d0d8e0"/>
</g>
<g fill="none" stroke="#1f6db4" stroke-width="4.1" stroke-linecap="square" opacity="0.95">
<!-- 河 656-680 -->
<path d="M658.5,628 l3,3 M657.5,635.5 l3,2.5 M657.5,650 l5,-9"/>
<path d="M664,628.5 H680 M676.5,628.5 V648.5 l-3,-2"/>
<path d="M666,634.5 H672 V642 H666Z"/>
<!-- 东 683-708 -->
<path d="M684,629 H707 M694.5,625.5 L688,638 H706 M696,633.5 V649.5 l-3,-2 M689.5,642 l-4,5 M701,642 l4,5"/>
<!-- 软 711-735 -->
<path d="M712,629 H722 M717,625.5 L713.5,638 H722 M718,632 V650 M712,645 L722.5,642.5"/>
<path d="M726.5,625.5 L724.5,632 M725,630 H736 l-2,4 M730,631 V638 L724,650 M730,638 L737,650"/>
<!-- 件 739-763 -->
<path d="M745,625.5 L740,637 M743,633 V650.5"/>
<path d="M749.5,626 L747.5,633 M748,632 H763 M747,641 H764 M755,625.5 V650.5"/>
<!-- 园 766-791 -->
<path d="M767.5,626.5 H789.5 V650.5 H767.5Z"/>
<path d="M772.5,632 H784 M771.5,637.5 H785.5 M776,637.5 L772.5,646.5 M780,637.5 V645.5 H785"/>
</g>
<text x="656" y="672.4" font-family="Liberation Serif" font-weight="bold" font-size="18" fill="#2a8a2a" stroke="#2a8a2a" stroke-width="0.5" opacity="0.72" textLength="134" lengthAdjust="spacingAndGlyphs">www.pc0359.cn</text>
</svg>
<!-- < - > glyphs -->
<svg style="position:absolute;left:177px;top:201px" width="96" height="28" viewBox="177 201 96 28">
<g fill="none" stroke="#2a2a2a" stroke-width="1.1">
<path d="M194,211.3 L190.6,215.3 L194,219.4"/>
<path d="M220.8,215.5 H227.4"/>
<path d="M255,211.3 L258.6,215.3 L255,219.4"/>
</g></svg>

<div style="left:0px;top:687px;width:800px;height:4px;background:linear-gradient(#86d6fa 0px,#70c8f4 1.5px,#3fa0e2 2px,#3c9ade 4px);"></div>
</body></html>
